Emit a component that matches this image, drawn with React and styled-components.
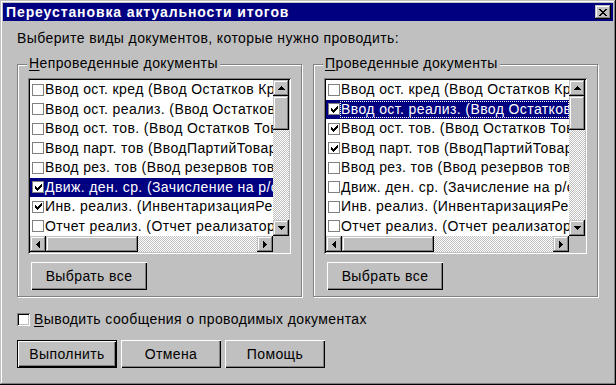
import React from 'react';
import styled, { createGlobalStyle, css } from 'styled-components';

const GlobalStyle = createGlobalStyle`
  html, body {
    margin: 0;
    padding: 0;
    background: #c0c0c0;
  }
  body {
    font-family: "Liberation Sans", Arial, sans-serif;
    font-size: 14px;
    letter-spacing: 0.4px;
    color: #000;
  }
  * {
    box-sizing: border-box;
  }
`;

const raised = css`
  background: #c0c0c0;
  box-shadow: inset -1px -1px #000, inset 1px 1px #c0c0c0,
    inset -2px -2px #808080, inset 2px 2px #fff;
`;

const Window = styled.div`
  width: 616px;
  height: 385px;
  padding: 3px;
  background: #c0c0c0;
  box-shadow: inset -1px -1px #000, inset 1px 1px #c0c0c0,
    inset -2px -2px #808080, inset 2px 2px #fff;
  display: flex;
  flex-direction: column;
`;

const TitleBar = styled.div`
  height: 18px;
  flex: none;
  background: #000080;
  color: #fff;
  display: flex;
  align-items: center;
  justify-content: space-between;
  padding: 0 2px 0 3px;
`;

const Title = styled.span`
  font-weight: bold;
  font-size: 14px;
  letter-spacing: 0.9px;
  line-height: 18px;
  white-space: nowrap;
`;

const CloseButton = styled.div`
  ${raised};
  width: 16px;
  height: 14px;
  display: flex;
  align-items: center;
  justify-content: center;
`;

const Body = styled.div`
  flex: 1;
  padding: 9px 15px 0 14px;
  display: flex;
  flex-direction: column;
`;

const Prompt = styled.div`
  line-height: 16px;
  white-space: nowrap;
`;

const Groups = styled.div`
  display: flex;
  gap: 11px;
  margin-top: 18px;
`;

const Group = styled.div`
  position: relative;
  width: 285px;
  height: 233px;
  border: 1px solid #808080;
  box-shadow: inset 1px 1px #fff, 1px 1px #fff;
  padding: 13px 10px 0 10px;
  display: flex;
  flex-direction: column;
  align-items: flex-start;
`;

const Legend = styled.span`
  position: absolute;
  top: -10px;
  left: 9px;
  padding: 0 2px;
  background: #c0c0c0;
  line-height: 16px;
  white-space: nowrap;
`;

const Key = styled.u`
  text-decoration: underline;
  text-underline-offset: 2px;
`;

const ListBox = styled.div`
  width: 263px;
  height: 176px;
  padding: 2px;
  background: #fff;
  box-shadow: inset 1px 1px #808080, inset -1px -1px #fff,
    inset 2px 2px #000, inset -2px -2px #c0c0c0;
  display: grid;
  grid-template-columns: 1fr 16px;
  grid-template-rows: 1fr 16px;
`;

const Rows = styled.div`
  overflow: hidden;
  background: #fff;
`;

const Row = styled.div`
  height: 19.5px;
  display: flex;
  align-items: center;
  padding-left: 2px;
  white-space: nowrap;
  background: ${(p) => (p.$selected ? '#000080' : 'transparent')};
  color: ${(p) => (p.$selected ? '#fff' : '#000')};
`;

const Check = styled.span`
  flex: none;
  width: 12px;
  height: 12px;
  border: 1px solid #808080;
  background: #fff;
  display: flex;
  align-items: center;
  justify-content: center;
`;

const ItemText = styled.span`
  flex: 1;
  padding-left: 1px;
  line-height: 17px;
  overflow: hidden;
  outline: ${(p) => (p.$focused ? '1px dotted #fff' : 'none')};
  outline-offset: -1px;
`;

const VScroll = styled.div`
  display: flex;
  flex-direction: column;
`;

const HScroll = styled.div`
  display: flex;
`;

const ScrollButton = styled.div`
  ${raised};
  flex: none;
  width: 16px;
  height: 16px;
  display: flex;
  align-items: center;
  justify-content: center;
`;

const Thumb = styled.div`
  ${raised};
  flex: none;
  width: ${(p) => (p.$horizontal ? `${p.$size}px` : '16px')};
  height: ${(p) => (p.$horizontal ? '16px' : `${p.$size}px`)};
`;

const Track = styled.div`
  flex: 1;
  background-image: conic-gradient(#fff 25%, #c0c0c0 0 50%, #fff 0 75%, #c0c0c0 0);
  background-size: 2px 2px;
`;

const Corner = styled.div`
  background: #c0c0c0;
`;

const PushButton = styled.div`
  width: ${(p) => p.$width || 100}px;
  height: 28px;
  background: #c0c0c0;
  display: flex;
  align-items: center;
  justify-content: center;
  white-space: nowrap;
  border: ${(p) => (p.$default ? '1px solid #000' : 'none')};
  box-shadow: inset 1px 1px #fff, inset -1px -1px #000, inset -2px -2px #808080;
`;

const GroupButton = styled(PushButton)`
  margin: 8px 0 0 3px;
`;

const OptionRow = styled.div`
  display: flex;
  align-items: flex-start;
  gap: 4px;
  margin-top: 14px;
  line-height: 16px;
`;

const OptionBox = styled.span`
  width: 13px;
  height: 13px;
  margin-top: 2px;
  background: #fff;
  box-shadow: inset 1px 1px #808080, inset -1px -1px #fff,
    inset 2px 2px #000, inset -2px -2px #c0c0c0;
`;

const ButtonBar = styled.div`
  display: flex;
  gap: 4px;
  margin-top: 13px;
`;

const glyphs = {
  up: { w: 7, h: 4, d: 'M3 0h1v1h-1zM2 1h3v1h-3zM1 2h5v1h-5zM0 3h7v1h-7z' },
  down: { w: 7, h: 4, d: 'M0 0h7v1h-7zM1 1h5v1h-5zM2 2h3v1h-3zM3 3h1v1h-1z' },
  left: { w: 4, h: 7, d: 'M3 0h1v7h-1zM2 1h1v5h-1zM1 2h1v3h-1zM0 3h1v1h-1z' },
  right: { w: 4, h: 7, d: 'M0 0h1v7h-1zM1 1h1v5h-1zM2 2h1v3h-1zM3 3h1v1h-1z' },
  close: {
    w: 8,
    h: 7,
    d: 'M0 0h2v1h-2zM6 0h2v1h-2zM1 1h2v1h-2zM5 1h2v1h-2zM2 2h4v1h-4zM3 3h2v1h-2zM2 4h4v1h-4zM1 5h2v1h-2zM5 5h2v1h-2zM0 6h2v1h-2zM6 6h2v1h-2z',
  },
  check: {
    w: 7,
    h: 7,
    d: 'M6 0h1v1h-1zM5 1h2v1h-2zM0 2h1v1h-1zM4 2h3v1h-3zM0 3h2v1h-2zM3 3h3v1h-3zM0 4h5v1h-5zM1 5h3v1h-3zM2 6h1v1h-1z',
  },
};

function Glyph({ name, color = '#000' }) {
  const g = glyphs[name];
  return (
    <svg width={g.w} height={g.h} viewBox={`0 0 ${g.w} ${g.h}`} shapeRendering="crispEdges">
      <path d={g.d} fill={color} />
    </svg>
  );
}

const documents = [
  'Ввод ост. кред (Ввод Остатков Кредиторов)',
  'Ввод ост. реализ. (Ввод Остатков Реализации)',
  'Ввод ост. тов. (Ввод Остатков Товаров)',
  'Ввод парт. тов (ВводПартийТоваров)',
  'Ввод рез. тов (Ввод резервов товаров)',
  'Движ. ден. ср. (Зачисление на р/с, списание с р/с)',
  'Инв. реализ. (ИнвентаризацияРеализации)',
  'Отчет реализ. (Отчет реализатора)',
];

function DocList({ checked, selected, focused }) {
  return (
    <ListBox>
      <Rows>
        {documents.map((doc, i) => (
          <Row key={doc} $selected={i === selected}>
            <Check>{checked.includes(i) && <Glyph name="check" />}</Check>
            <ItemText $focused={focused && i === selected}>{doc}</ItemText>
          </Row>
        ))}
      </Rows>
      <VScroll>
        <ScrollButton>
          <Glyph name="up" />
        </ScrollButton>
        <Thumb $size={34} />
        <Track />
        <ScrollButton>
          <Glyph name="down" />
        </ScrollButton>
      </VScroll>
      <HScroll>
        <ScrollButton>
          <Glyph name="left" />
        </ScrollButton>
        <Thumb $horizontal $size={92} />
        <Track />
        <ScrollButton>
          <Glyph name="right" />
        </ScrollButton>
      </HScroll>
      <Corner />
    </ListBox>
  );
}

export default function App() {
  return (
    <>
      <GlobalStyle />
      <Window>
        <TitleBar>
          <Title>Переустановка актуальности итогов</Title>
          <CloseButton>
            <Glyph name="close" />
          </CloseButton>
        </TitleBar>
        <Body>
          <Prompt>Выберите виды документов, которые нужно проводить:</Prompt>
          <Groups>
            <Group>
              <Legend>
                <Key>Н</Key>епроведенные документы
              </Legend>
              <DocList checked={[5, 6]} selected={5} />
              <GroupButton $width={116}>Выбрать все</GroupButton>
            </Group>
            <Group>
              <Legend>
                <Key>П</Key>роведенные документы
              </Legend>
              <DocList checked={[1, 2, 3]} selected={1} focused />
              <GroupButton $width={116}>Выбрать все</GroupButton>
            </Group>
          </Groups>
          <OptionRow>
            <OptionBox />
            <span>
              <Key>В</Key>ыводить сообщения о проводимых документах
            </span>
          </OptionRow>
          <ButtonBar>
            <PushButton $default>Выполнить</PushButton>
            <PushButton>Отмена</PushButton>
            <PushButton>Помощь</PushButton>
          </ButtonBar>
        </Body>
      </Window>
    </>
  );
}
